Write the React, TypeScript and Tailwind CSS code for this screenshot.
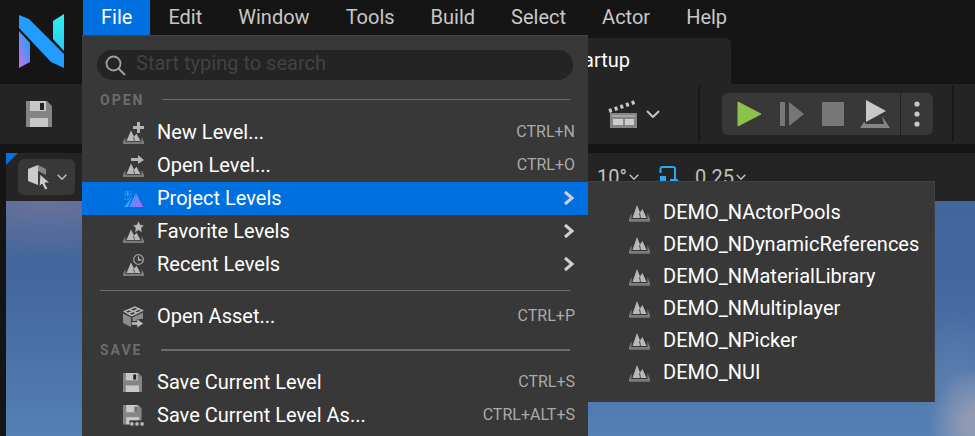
import type { ReactNode } from "react";

const menus = ["File", "Edit", "Window", "Tools", "Build", "Select", "Actor", "Help"];

const levels = [
  "DEMO_NActorPools",
  "DEMO_NDynamicReferences",
  "DEMO_NMaterialLibrary",
  "DEMO_NMultiplayer",
  "DEMO_NPicker",
  "DEMO_NUI",
];

function Logo() {
  return (
    <svg width="46" height="54" viewBox="0 0 46 54" aria-hidden="true">
      <defs>
        <linearGradient id="logoLeft" x1="1" y1="0" x2="0" y2="1">
          <stop offset="0.3" stopColor="#359bff" />
          <stop offset="1" stopColor="#dc6be0" />
        </linearGradient>
        <linearGradient id="logoRight" x1="0" y1="0" x2="0" y2="1">
          <stop offset="0" stopColor="#2ff0ee" />
          <stop offset="1" stopColor="#27ccf8" />
        </linearGradient>
      </defs>
      <path d="M0 17 11 29V48L0 54Z" fill="url(#logoLeft)" />
      <path d="M34 7 45 0V37L34 25Z" fill="url(#logoRight)" />
      <path d="M0 1 10 5 45 40V54L32 48 0 14Z" fill="#219cff" />
    </svg>
  );
}

function LevelIcon({ children }: { children?: ReactNode }) {
  return (
    <svg width="21" height="22" viewBox="0 0 21 22" aria-hidden="true">
      <g transform={children ? "translate(0 8.500) scale(1 0.8)" : "translate(0 5)"}>
        <path d="M0 14H21V16.800H0ZM0 14 2.500 8 2.500 14ZM21 14 18.500 8V14Z" fill="#7b7b7b" />
        <path d="M3.500 13 8 0 11 7.500 13.500 4 17.500 13Z" fill="#b8b8b8" />
        <path d="M10.500 8 11.500 13" stroke="#383838" strokeWidth="0.800" />
      </g>
      {children}
    </svg>
  );
}

function Floppy({ size, dots = false }: { size: number; dots?: boolean }) {
  return (
    <svg width={size} height={size} viewBox="0 0 26 26" aria-hidden="true">
      <path d={dots ? "M0 0H19L23 4V24H0Z" : "M0 0H21L26 5V26H0Z"} fill="#858585" />
      <path d={dots ? "M4 0H18V9H4Z" : "M4 0H20V10H4Z"} fill="#c8c8c8" />
      <path d="M14 2H18V9H14Z" fill={dots ? "#707070" : "#242424"} />
      <path d={dots ? "M4 15H20V24H4Z" : "M4 17H22V26H4Z"} fill="#c8c8c8" />
      {dots && <path d="M8 19H26V26H8Z" fill="#383838" />}
      {dots && (
        <g fill="#b8b8b8">
          <circle cx="11" cy="23.500" r="2.300" />
          <circle cx="17.300" cy="23.500" r="2.300" />
          <circle cx="23.600" cy="23.500" r="2.300" />
        </g>
      )}
    </svg>
  );
}

function Chevron({ className }: { className: string }) {
  return (
    <svg className={className} viewBox="0 0 14 8" aria-hidden="true">
      <path d="M1 1 7 7 13 1" fill="none" stroke="#c4c4c4" strokeWidth="2" />
    </svg>
  );
}

const icons = {
  add: (
    <LevelIcon>
      <path d="M14 0H17V4H21V7H17V11H14V7H10V4H14Z" fill="#b4b4b4" />
    </LevelIcon>
  ),
  open: (
    <LevelIcon>
      <path d="M8 3H15V0L21 5 15 9V6H8Z" fill="#b4b4b4" />
    </LevelIcon>
  ),
  project: (
    <svg width="21" height="22" viewBox="0 0 21 22" aria-hidden="true">
      <defs>
        <linearGradient id="peak" x1="0" y1="0" x2="1" y2="0.400">
          <stop offset="0" stopColor="#24a4ff" />
          <stop offset="0.500" stopColor="#598cff" />
          <stop offset="1" stopColor="#a56cf4" />
        </linearGradient>
      </defs>
      <path d="M6 19 13 5 20 19Z" fill="url(#peak)" />
      <path d="M1 19 9 9 5 19Z" fill="#39a4ff" />
      <path
        d="M4.500 3V9M1 6H9M2 3 7 9M7 3 2 9M1 11H8"
        fill="none"
        stroke="#38a8ff"
        strokeWidth="1"
        strokeDasharray="2 1"
      />
    </svg>
  ),
  star: (
    <LevelIcon>
      <path
        d="M15.500 0 17.300 3.700 21.200 4.200 18.300 7 19.200 11.500 15.500 9.300 11.700 11.500 12.600 7 9.800 4.200 13.700 3.700Z"
        fill="#b8b8b8"
        stroke="#383838"
        strokeWidth="0.500"
      />
    </LevelIcon>
  ),
  clock: (
    <LevelIcon>
      <circle cx="15.500" cy="5.500" r="4.800" fill="#383838" stroke="#a0a0a0" strokeWidth="1.300" />
      <path d="M15.500 2.500V6H18.500" fill="none" stroke="#b0b0b0" strokeWidth="1.300" />
    </LevelIcon>
  ),
  asset: (
    <svg width="21" height="22" viewBox="0 0 21 22" aria-hidden="true">
      <path d="M0 7.500 8 11.500V21L0 17Z" fill="#8c8c8c" />
      <path d="M9.500 11.500 20 6.500V13H16V15H9.500Z" fill="#8c8c8c" />
      <path
        d="M1.500 5.500 12 1 19.500 4.500 8.800 9.700ZM6 3.500 14 7M5 7.500 16 3"
        fill="none"
        stroke="#b8b8b8"
        strokeWidth="1.400"
      />
      <path d="M8.500 16H14V13L20.500 17.500 14 22V19H8.500Z" fill="#bcbcbc" stroke="#383838" strokeWidth="0.500" />
    </svg>
  ),
  save: <Floppy size={19} />,
  saveAs: <Floppy size={21} dots />,
};

type RowProps = {
  icon: keyof typeof icons;
  label: string;
  shortcut?: string;
  submenu?: boolean;
  active?: boolean;
};

function Row({ icon, label, shortcut, submenu, active }: RowProps) {
  return (
    <button
      type="button"
      role="menuitem"
      aria-haspopup={submenu ? "menu" : undefined}
      className={`flex h-[33px] w-full items-center pr-[13px] pb-0.5 pl-10 text-left ${active ? "bg-[#0070e0]" : ""}`}
    >
      <span className="flex w-[35px] shrink-0 pt-0.5 pl-px">{icons[icon]}</span>
      <span className="grow text-white">{label}</span>
      {shortcut && <span className="text-base text-[#aaaaaa]">{shortcut}</span>}
      {submenu && (
        <svg width="12" height="16" viewBox="0 0 12 16" aria-hidden="true">
          <path d="M2 2 9 8 2 14" fill="none" stroke="#cfcfcf" strokeWidth="3" />
        </svg>
      )}
    </button>
  );
}

function Section({ title, thick = false }: { title: string; thick?: boolean }) {
  return (
    <div className="flex h-[33px] items-center gap-[18px] px-[18px]">
      <span className="text-sm font-bold tracking-[2px] text-[#6c6c6c]">{title}</span>
      <span className={`grow bg-[#6c6c6c] ${thick ? "h-0.5" : "h-px"}`} />
    </div>
  );
}

function FileMenu() {
  return (
    <div
      role="menu"
      aria-label="File"
      className="absolute top-[35px] left-[82px] z-10 w-[506px] border-t border-[#454545] bg-[#383838] pt-3.5 pb-6"
    >
      <label className="mx-[15px] flex h-[30px] items-center gap-2.5 rounded-full bg-[#242424] pl-2">
        <svg width="21" height="21" viewBox="0 0 21 21" aria-hidden="true">
          <circle cx="8.500" cy="8.500" r="7" fill="none" stroke="#a0a0a0" strokeWidth="1.800" />
          <path d="M13.500 13.500 20 20" stroke="#a0a0a0" strokeWidth="2" />
        </svg>
        <input
          type="text"
          aria-label="Search menu"
          placeholder="Start typing to search"
          className="mb-1 h-6 min-w-0 grow bg-transparent leading-6 outline-none placeholder:text-[#424242]"
        />
      </label>
      <div className="h-[3px]" />
      <Section title="OPEN" />
      <Row icon="add" label="New Level..." shortcut="CTRL+N" />
      <Row icon="open" label="Open Level..." shortcut="CTRL+O" />
      <Row icon="project" label="Project Levels" submenu active />
      <Row icon="star" label="Favorite Levels" submenu />
      <Row icon="clock" label="Recent Levels" submenu />
      <hr className="mx-[18px] my-[9px] border-t border-[#6c6c6c]" />
      <Row icon="asset" label="Open Asset..." shortcut="CTRL+P" />
      <Section title="SAVE" thick />
      <Row icon="save" label="Save Current Level" shortcut="CTRL+S" />
      <Row icon="saveAs" label="Save Current Level As..." shortcut="CTRL+ALT+S" />
    </div>
  );
}

function LevelsMenu() {
  return (
    <div
      role="menu"
      aria-label="Project Levels"
      className="absolute top-[181px] left-[588px] z-20 w-[347px] border-t border-r border-[#424242] bg-[#383838] pt-3.5 pb-3.5"
    >
      {levels.map((name) => (
        <button
          key={name}
          type="button"
          role="menuitem"
          className="flex h-8 w-full items-center gap-[13px] pl-[41px] text-left text-white"
        >
          <span className="flex pb-0.5">
            <LevelIcon />
          </span>
          {name}
        </button>
      ))}
    </div>
  );
}

function Toolbar() {
  return (
    <div className="flex h-[60px] items-center bg-[#242424]">
      <button type="button" aria-label="Save" className="ml-[26px]">
        <Floppy size={26} />
      </button>
      <button type="button" aria-label="Cinematics" className="ml-[556px] flex items-center gap-2">
        <svg width="30" height="30" viewBox="0 0 30 30" aria-hidden="true">
          <path d="M1 12 27 3" stroke="#c8c8c8" strokeWidth="4" strokeDasharray="3 3" />
          <path d="M2 14H29V29H2Z" fill="#858585" />
          <path d="M4 17H27" stroke="#c0c0c0" />
          <path d="M5 20H15V26H5ZM17 20H26V26H17Z" fill="#cccccc" />
        </svg>
        <Chevron className="h-2 w-3.5" />
      </button>
      <span className="ml-[38px] h-14 w-0.5 bg-[#191919]" />
      <div className="ml-[22px] flex h-[42px] shrink-0 items-center rounded-md bg-[#383838]">
        <button type="button" aria-label="Play" className="pl-[15px]">
          <svg width="24" height="26" viewBox="0 0 24 26" aria-hidden="true">
            <path d="M1 1 24 13 1 25Z" fill="#8bc24a" stroke="#8bc24a" strokeLinejoin="round" />
          </svg>
        </button>
        <button type="button" aria-label="Step" className="pl-[19px]">
          <svg width="24" height="26" viewBox="0 0 24 26" aria-hidden="true">
            <path d="M0 1H5V25H0ZM9 1 24 13 9 25Z" fill="#777777" />
          </svg>
        </button>
        <button type="button" aria-label="Stop" className="pl-[18px]">
          <svg width="22" height="24" viewBox="0 0 22 24" aria-hidden="true">
            <path d="M0 0H22V24H0Z" fill="#777777" />
          </svg>
        </button>
        <button type="button" aria-label="Launch" className="pr-2.5 pl-4">
          <svg width="30" height="28" viewBox="0 0 30 28" aria-hidden="true">
            <path d="M4 22 6 24H24L22 16 30 28H0Z" fill="#858585" />
            <path d="M6 0 26 11 6 22Z" fill="#c8c8c8" />
          </svg>
        </button>
        <button
          type="button"
          aria-label="Play options"
          className="flex h-full w-[33px] items-center justify-center border-l border-[#202020]"
        >
          <svg width="6" height="26" viewBox="0 0 6 26" aria-hidden="true" fill="#c8c8c8">
            <circle cx="3" cy="3" r="2.600" />
            <circle cx="3" cy="13" r="2.600" />
            <circle cx="3" cy="23" r="2.600" />
          </svg>
        </button>
      </div>
      <span className="ml-[19px] h-14 w-0.5 bg-[#191919]" />
    </div>
  );
}

function ViewportBar() {
  return (
    <div className="relative flex h-12 items-center bg-[#242424] pl-3">
      <svg className="absolute top-0 left-0" width="12" height="12" viewBox="0 0 12 12" aria-hidden="true">
        <path d="M0 0H12L0 12Z" fill="#0070e0" />
      </svg>
      <button
        type="button"
        aria-label="Selection mode"
        className="flex h-9 w-[57px] items-center gap-1.5 rounded-md bg-[#383838] pl-2.5"
      >
        <svg width="23" height="26" viewBox="0 0 23 26" aria-hidden="true">
          <path d="M0 5 10 1V21L0 17Z" fill="#cccccc" />
          <path d="M10 1 18 5V11L10 7Z" fill="#858585" />
          <path d="M12 10 22 19 17 19 20 25 17 26 14 20 11 23Z" fill="#cccccc" stroke="#383838" />
        </svg>
        <Chevron className="h-1.5 w-2.5" />
      </button>
      <button type="button" className="ml-[522px] flex items-center gap-0.5 text-[#c0c0c0]">
        10°
        <Chevron className="h-1.5 w-2.5" />
      </button>
      <button type="button" aria-label="Scale snapping" className="ml-5">
        <svg width="22" height="24" viewBox="0 0 22 24" aria-hidden="true">
          <path d="M1.500 8V4Q1.500 2 3.500 2H14Q16 2 16 4V15H11" fill="none" stroke="#26a9f0" strokeWidth="2" />
          <path d="M1 11H7V18H1ZM17 13 22 18 17 19Z" fill="#26a9f0" />
        </svg>
      </button>
      <button type="button" className="ml-3.5 flex items-center gap-0.5 text-[#c0c0c0]">
        0.25
        <Chevron className="h-1.5 w-2.5" />
      </button>
    </div>
  );
}

export default function App() {
  return (
    <div className="relative h-screen overflow-hidden bg-[#151515] font-['Roboto',sans-serif] text-xl leading-6 text-[#c8c8c8]">
      <header className="flex h-[84px]">
        <div className="flex w-[83px] shrink-0 justify-center pt-3.5">
          <Logo />
        </div>
        <div className="grow">
          <nav className="flex h-[35px]" role="menubar" aria-label="Main menu">
            {menus.map((name) => (
              <button
                key={name}
                type="button"
                role="menuitem"
                className={`px-[18px] pb-0.5 ${name === "File" ? "bg-[#0070e0] text-white" : ""}`}
              >
                {name}
              </button>
            ))}
          </nav>
          <div
            role="tab"
            className="mt-[3px] flex h-[46px] w-[648px] items-center justify-end rounded-t-md bg-[#242424] pr-[101px] pb-0.5 text-white"
          >
            Startup
          </div>
        </div>
      </header>
      <Toolbar />
      <main className="mt-[9px] ml-1.5">
        <ViewportBar />
        <div className="h-screen bg-[radial-gradient(ellipse_50px_60px_at_974px_225px,#8f9ab4_30%,transparent),radial-gradient(ellipse_40px_80px_at_950px_190px,#6f88b080,transparent),radial-gradient(ellipse_160px_60px_at_40px_0px,#6a7299,transparent),linear-gradient(180deg,#41669c_0px,#43679e_80px,#5480b4_235px)]" />
      </main>
      <FileMenu />
      <LevelsMenu />
    </div>
  );
}
